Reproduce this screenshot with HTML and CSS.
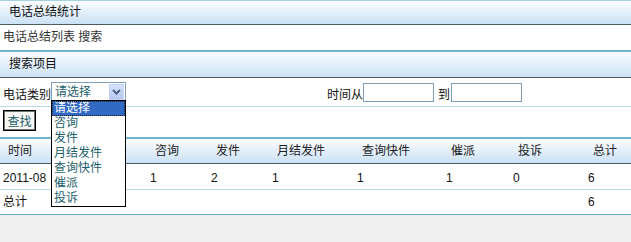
FILE: index.html
```html
<!DOCTYPE html>
<html lang="zh-CN">
<head>
    <meta charset="UTF-8">
    <title>电话总结统计</title>
    <link rel="stylesheet" href="styles.css">
</head>
<body>
    <div class="page">
        <div class="bar title">电话总结统计</div>
        <div class="crumb">电话总结列表&nbsp;搜索</div>
        <div class="bar section">搜索项目</div>
        <div class="filters">
            <div class="filter-row">
                <span class="label">电话类别</span>
                <div class="combo">
                    <span class="combo-text">请选择</span>
                    <span class="combo-btn">
                        <svg width="9" height="6" viewBox="0 0 9 6"><path d="M1 1 L4.5 4.5 L8 1" fill="none" stroke="#4a5f88" stroke-width="2"/></svg>
                    </span>
                    <ul class="combo-list">
                        <li class="active">请选择</li>
                        <li>咨询</li>
                        <li>发件</li>
                        <li>月结发件</li>
                        <li>查询快件</li>
                        <li>催派</li>
                        <li>投诉</li>
                    </ul>
                </div>
                <span class="label from">时间从</span>
                <input type="text" class="date">
                <span class="label to">到</span>
                <input type="text" class="date last">
            </div>
            <div class="action-row">
                <button class="btn">查找</button>
            </div>
        </div>
        <table class="grid">
            <colgroup>
                <col style="width:147px">
                <col style="width:61px">
                <col style="width:61px">
                <col style="width:85px">
                <col style="width:89px">
                <col style="width:67px">
                <col style="width:75px">
                <col>
            </colgroup>
            <thead>
                <tr>
                    <th>时间</th>
                    <th>咨询</th>
                    <th>发件</th>
                    <th>月结发件</th>
                    <th>查询快件</th>
                    <th>催派</th>
                    <th>投诉</th>
                    <th>总计</th>
                </tr>
            </thead>
            <tbody>
                <tr class="data">
                    <td>2011-08</td>
                    <td>1</td>
                    <td>2</td>
                    <td>1</td>
                    <td>1</td>
                    <td>1</td>
                    <td>0</td>
                    <td>6</td>
                </tr>
                <tr class="sum">
                    <td>总计</td>
                    <td></td>
                    <td></td>
                    <td></td>
                    <td></td>
                    <td></td>
                    <td></td>
                    <td>6</td>
                </tr>
            </tbody>
        </table>
    </div>
</body>
</html>
```

FILE: styles.css
```css
body {
    margin: 0;
    background: #efefef;
    font-family: 'Liberation Sans', 'Noto Sans CJK SC', sans-serif;
    font-size: 12px;
    color: #111;
}
.page {
    background: #fff;
}
.bar {
    background: linear-gradient(#fbfdff, #cbe1f5);
    border-bottom: 1px solid #4c5c5c;
    padding-left: 9px;
}
.title {
    border-top: 1px solid #a6d3e4;
    height: 23px;
    line-height: 23px;
}
.section {
    border-top: 2px solid #71b4d2;
    height: 25px;
    line-height: 25px;
}
.crumb {
    height: 25px;
    line-height: 25px;
    padding-left: 3px;
    color: #333;
}
.filter-row {
    display: flex;
    align-items: flex-end;
    height: 29px;
    padding: 0 0 4px 3px;
    box-sizing: border-box;
    border-bottom: 1px solid #bcdbe8;
}
.label {
    line-height: 14px;
}
.from {
    margin-left: 201px;
}
.to {
    margin-left: 4px;
}
.combo {
    position: relative;
    width: 75px;
    height: 20px;
    box-sizing: border-box;
    border: 1px solid #7f9db9;
    display: flex;
    align-items: center;
    justify-content: space-between;
    padding: 0 1px 0 3px;
}
.combo-text {
    color: #1d5f6b;
    line-height: 14px;
}
.combo-btn {
    width: 15px;
    height: 16px;
    background: linear-gradient(#d6e2fb, #b4c8f0);
    border: 1px solid #c3d3f5;
    box-sizing: border-box;
    display: flex;
    align-items: center;
    justify-content: center;
}
.combo-list {
    position: absolute;
    left: -1px;
    top: 17px;
    width: 73px;
    margin: 0;
    padding: 0;
    list-style: none;
    background: #fff;
    border: 1px solid #000;
    z-index: 2;
}
.combo-list li {
    line-height: 15px;
    padding-left: 2px;
    color: #1d5f6b;
}
.combo-list li.active {
    background: #316ac5;
    color: #fff;
    outline: 1px dotted #222;
    outline-offset: -1px;
}
.date {
    width: 71px;
    height: 19px;
    box-sizing: border-box;
    border: 1px solid #7f9db9;
    margin: 0;
    padding: 0;
}
.date.last {
    margin-left: 1px;
}
.action-row {
    height: 30px;
    padding: 3px 0 0 3px;
    box-sizing: border-box;
}
.btn {
    width: 33px;
    height: 21px;
    padding: 0;
    font: inherit;
    color: #1d5f6b;
    background: #f6f6f2;
    border: 1px solid #000;
    box-shadow: inset 0 0 0 1px #6a7272;
}
.grid {
    width: 100%;
    table-layout: fixed;
    border-collapse: separate;
    border-spacing: 0;
}
.grid th {
    font-weight: normal;
    text-align: left;
    padding: 0 0 0 8px;
    line-height: 24px;
    color: #222;
    background: linear-gradient(#fbfdff, #cbe1f5);
    border-top: 2px solid #71b4d2;
    border-bottom: 1px solid #4c5c5c;
}
.grid td {
    padding: 3px 0 0 3px;
    line-height: 22px;
    border-bottom: 1px solid #b7d8e7;
    white-space: nowrap;
    overflow: hidden;
}
.grid .sum td {
    padding-top: 1px;
    line-height: 23px;
    border-bottom: 1px solid #6aaccd;
}
```
